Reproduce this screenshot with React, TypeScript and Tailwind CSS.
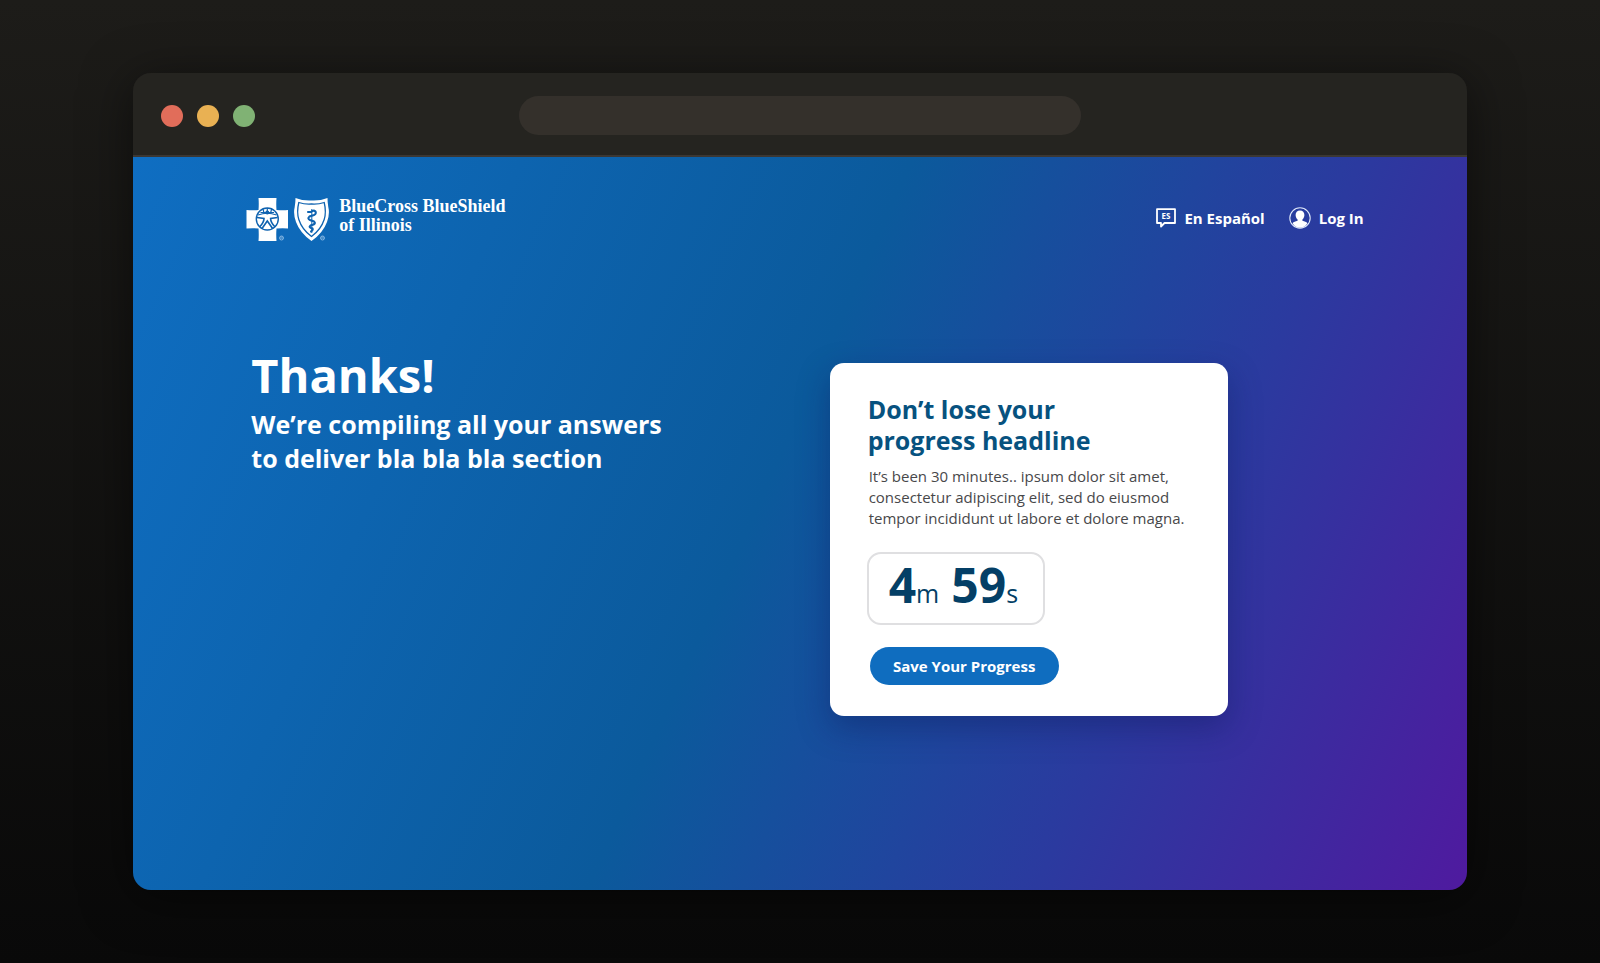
import React from "react";

function CrossLogo() {
  return (
    <svg width="48" height="43" viewBox="0 0 48 43" aria-hidden="true">
      <path
        fill="#fff"
        d="M12.500 0h18q-.5 6 0 12q6 .5 11.500 0v18.500q-5-.5-11.500 0q-.5 6 0 12.500h-18q.5-7 0-12.500q-6-.5-12 0V12q6 .5 12 0q.5-6 0-12z"
      />
      <g fill="none" stroke="#0f63b0">
        <circle cx="21.300" cy="21" r="11" strokeWidth="1.400" />
        <path d="M12 17q9.300-3.500 18.600 0M14.500 14.500h13.600M21.300 10v3M17 11l1 4M25.600 11l-1 4" strokeWidth="1.200" />
        <path d="M11 19.500l7 1q0 4-4.500 8.500M31.600 19.500l-7 1q0 4 4.500 8.500M16 30.500l5.300-7.500 5.300 7.500" strokeWidth="1.600" />
      </g>
      <circle cx="21.300" cy="14.500" r="2" fill="#0f63b0" />
      <circle cx="35.500" cy="40" r="2" fill="none" stroke="#9cc5ea" strokeWidth="0.800" />
      <path d="M34.900 41.200v-2.300h1q.8.600 0 1.100l.5 1.200" fill="none" stroke="#9cc5ea" strokeWidth="0.600" />
    </svg>
  );
}

function ShieldLogo() {
  return (
    <svg width="37" height="43" viewBox="0 0 37 43" aria-hidden="true">
      <path
        fill="#fff"
        d="M1.500 0Q9 3 17.500 2.500Q26 3 33.500 0Q33.500 4 34.300 9Q36 16 33 24Q29 35 17.500 43Q6 35 2 24Q-1 16 .7 9Q1.500 4 1.500 0z"
      />
      <path
        fill="none"
        stroke="#0f63b0"
        strokeWidth="1.300"
        d="M4.800 4.500Q11 6.500 17.500 6Q24 6.500 30.200 4.500Q32.500 14 30.200 21.500Q27 31.500 17.500 38.500Q8 31.500 4.800 21.500Q2.500 14 4.800 4.500z"
      />
      <path
        fill="none"
        stroke="#0f63b0"
        strokeWidth="2.100"
        strokeLinecap="round"
        d="M14 14h3q2.500-2.500 4.500-.5q1 2.500-1.500 3.500l-4.500 1.500q-2.500 2 .5 3.500l4 1.500q2 1.500-.5 3l-3 1q-2 1.500.5 2.500l1.500.5q1 1-1.500 3"
      />
      <path fill="none" stroke="#0f63b0" strokeWidth="1" d="M17.800 11v24" />
      <circle cx="28.500" cy="40" r="2" fill="none" stroke="#9cc5ea" strokeWidth="0.800" />
      <path d="M27.900 41.200v-2.300h1q.8.600 0 1.100l.5 1.200" fill="none" stroke="#9cc5ea" strokeWidth="0.600" />
    </svg>
  );
}

function SpanishIcon() {
  return (
    <svg width="20" height="20" viewBox="0 0 20 20" aria-hidden="true">
      <path d="M1 1.200h18v13.800H8.500L5 18.500V15H1z" fill="none" stroke="#fff" strokeWidth="1.800" strokeLinejoin="round" />
      <text x="10" y="11" textAnchor="middle" fontFamily="Open Sans, sans-serif" fontSize="8" fontWeight="700" fill="#fff">
        ES
      </text>
    </svg>
  );
}

function UserIcon() {
  return (
    <svg width="22" height="22" viewBox="0 0 22 22" aria-hidden="true">
      <circle cx="11" cy="11" r="10.200" fill="none" stroke="#dfe8fa" strokeWidth="1.100" />
      <path
        fill="#fff"
        d="M11 3.500c2.800 0 4.400 1.900 4.400 4.500 0 1.800-.8 3.500-2 4.500v1.300c2.200.5 4 1.200 5 2.400A9.300 9.300 0 0 1 11 20.800a9.300 9.300 0 0 1-7.400-4.600c1-1.200 2.800-1.900 5-2.400v-1.300c-1.200-1-2-2.700-2-4.500 0-2.600 1.600-4.500 4.400-4.500z"
      />
    </svg>
  );
}

function TitleBar() {
  return (
    <div className="grid h-[84px] grid-cols-[1fr_44%_1fr] items-center border-b-2 border-[#3b3733] bg-[#252420] px-7 pt-[3px]">
      <div className="flex gap-[14px]">
        <span className="size-[22px] rounded-full bg-[#e16d5a]" />
        <span className="size-[22px] rounded-full bg-[#e9b153]" />
        <span className="size-[22px] rounded-full bg-[#80b274]" />
      </div>
      <div className="h-[39px] rounded-full bg-[#34302b]" />
    </div>
  );
}

export default function App() {
  return (
    <div className="min-h-screen bg-linear-to-b from-[#1d1c19] to-[#090909] py-[73px] font-['Open_Sans',sans-serif]">
      <div className="mx-auto w-5/6 overflow-hidden rounded-[18px] shadow-[0_8px_50px_rgba(0,0,0,0.5)]">
        <TitleBar />
        <div className="bg-[linear-gradient(114deg,#0f6ec2_0%,#0b5a9c_47%,#2b3a9f_74%,#4f1a9f_100%)] text-white">
          <header className="flex items-start justify-between pt-[41px] pr-[103px] pl-[113px]">
            <a href="#home" className="flex">
              <CrossLogo />
              <ShieldLogo />
              <span className="-mt-px pl-2 font-['Liberation_Serif',serif] text-[18px] leading-[19px] font-bold">
                BlueCross BlueShield
                <br />
                of Illinois
              </span>
            </a>
            <nav className="flex items-center gap-6 pt-[9px] text-[15px] leading-[22px] font-bold">
              <a href="#es" className="flex items-center gap-2">
                <SpanishIcon />
                En Español
              </a>
              <a href="#login" className="flex items-center gap-2">
                <UserIcon />
                Log In
              </a>
            </nav>
          </header>
          <main className="flex items-start justify-between pt-[122px] pr-[239px] pb-[174px] pl-[118px]">
            <div className="-mt-4">
              <h1 className="text-[47px] leading-[56px] font-bold">Thanks!</h1>
              <p className="mt-1 text-[25px] leading-[34px] font-bold">
                We’re compiling all your answers
                <br />
                to deliver bla bla bla section
              </p>
            </div>
            <section className="w-[398px] rounded-[14px] bg-white px-[37px] pt-[31px] pb-[31px] shadow-[0_12px_32px_rgba(10,20,80,0.35)]">
              <h2 className="pl-px text-[25px] leading-[31px] font-bold text-[#07527f]">
                Don’t lose your
                <br />
                progress headline
              </h2>
              <p className="mt-[10px] pl-[2px] text-[15px] leading-[21px] whitespace-nowrap text-[#48484a]">
                It’s been 30 minutes.. ipsum dolor sit amet,
                <br />
                consectetur adipiscing elit, sed do eiusmod
                <br />
                tempor incididunt ut labore et dolore magna.
              </p>
              <div className="mt-[23px] flex h-[73px] w-[178px] items-start gap-3 rounded-[14px] border-2 border-[#dfdfe1] px-5 text-[#043f66]">
                <div className="flex items-baseline leading-[62px]">
                  <span className="text-[48px] font-bold">4</span>
                  <span className="text-[25px]">m</span>
                </div>
                <div className="flex items-baseline leading-[62px]">
                  <span className="text-[48px] font-bold">59</span>
                  <span className="text-[25px]">s</span>
                </div>
              </div>
              <button
                type="button"
                className="mt-[22px] ml-[3px] flex h-[38px] w-[189px] items-center justify-center rounded-full bg-[#0f6dbf] text-[15px] font-bold text-white"
              >
                Save Your Progress
              </button>
            </section>
          </main>
        </div>
      </div>
    </div>
  );
}
